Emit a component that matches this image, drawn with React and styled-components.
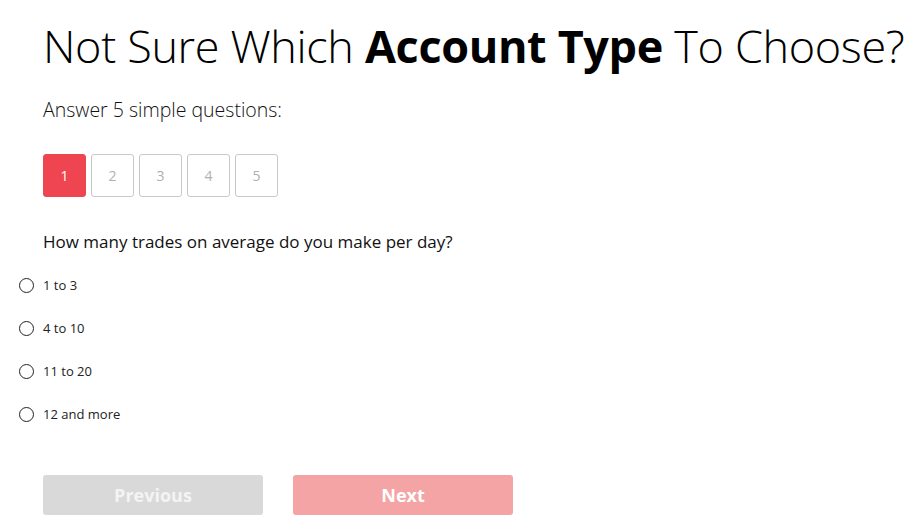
import React, { useState } from "react";
import styled, { createGlobalStyle } from "styled-components";

const GlobalStyle = createGlobalStyle`
  body {
    margin: 0;
    background: #fff;
    font-family: "Open Sans", "Noto Sans", sans-serif;
    color: #111;
  }
`;

const Page = styled.div`
  padding: 14px 0 0 43px;
  width: 924px;
  box-sizing: border-box;
  overflow: hidden;
`;

const Title = styled.h1`
  margin: 0;
  font-size: 45px;
  font-weight: 300;
  line-height: 64px;
  letter-spacing: -0.35px;
  white-space: nowrap;
  color: #000;

  b {
    font-weight: 700;
  }
`;

const Intro = styled.p`
  margin: 20px 0 0;
  font-size: 19.5px;
  font-weight: 300;
  line-height: 24px;
  color: #111;
`;

const Steps = styled.div`
  display: flex;
  gap: 5px;
  margin-top: 32px;
`;

const Step = styled.button`
  width: 43px;
  height: 43px;
  padding: 0;
  border-radius: 3px;
  border: 1px solid ${({ $active }) => ($active ? "#ef4551" : "#c8c8c8")};
  background: ${({ $active }) => ($active ? "#ef4551" : "#fff")};
  color: ${({ $active }) => ($active ? "#fff" : "#b0b0b0")};
  font-family: inherit;
  font-size: 14px;
  cursor: pointer;
`;

const Question = styled.p`
  margin: 34px 0 0;
  font-size: 17px;
  line-height: 22px;
  color: #111;
`;

const Options = styled.div`
  display: flex;
  flex-direction: column;
  gap: 21px;
  margin: 21px 0 0 -24px;
`;

const Option = styled.label`
  display: flex;
  align-items: center;
  gap: 9px;
  height: 22px;
  font-size: 13px;
  color: #222;
  cursor: pointer;
`;

const Radio = styled.input.attrs({ type: "radio" })`
  appearance: none;
  width: 15px;
  height: 15px;
  margin: 0;
  border: 1.5px solid #222;
  border-radius: 50%;
  background: #fff;
  box-sizing: border-box;

  &:checked {
    background: radial-gradient(circle, #222 0 3px, #fff 3.5px);
  }
`;

const Actions = styled.div`
  display: flex;
  gap: 30px;
  margin-top: 50px;
`;

const ActionButton = styled.button`
  width: 220px;
  height: 40px;
  border: none;
  border-radius: 3px;
  background: ${({ $variant }) => ($variant === "next" ? "#f5a4a6" : "#d9d9d9")};
  color: ${({ $variant }) => ($variant === "next" ? "#fff" : "#f4f4f4")};
  font-family: inherit;
  font-size: 18px;
  font-weight: 700;
  cursor: default;
`;

const answers = ["1 to 3", "4 to 10", "11 to 20", "12 and more"];

export default function App() {
  const [step, setStep] = useState(1);
  const [answer, setAnswer] = useState(null);

  return (
    <Page>
      <GlobalStyle />
      <Title>
        Not Sure Which <b>Account Type</b> To Choose?
      </Title>
      <Intro>Answer 5 simple questions:</Intro>
      <Steps>
        {[1, 2, 3, 4, 5].map((n) => (
          <Step key={n} $active={n === step} onClick={() => setStep(n)}>
            {n}
          </Step>
        ))}
      </Steps>
      <Question>How many trades on average do you make per day?</Question>
      <Options>
        {answers.map((a) => (
          <Option key={a}>
            <Radio name="trades" checked={answer === a} onChange={() => setAnswer(a)} />
            {a}
          </Option>
        ))}
      </Options>
      <Actions>
        <ActionButton disabled>Previous</ActionButton>
        <ActionButton $variant="next" disabled={!answer}>
          Next
        </ActionButton>
      </Actions>
    </Page>
  );
}
